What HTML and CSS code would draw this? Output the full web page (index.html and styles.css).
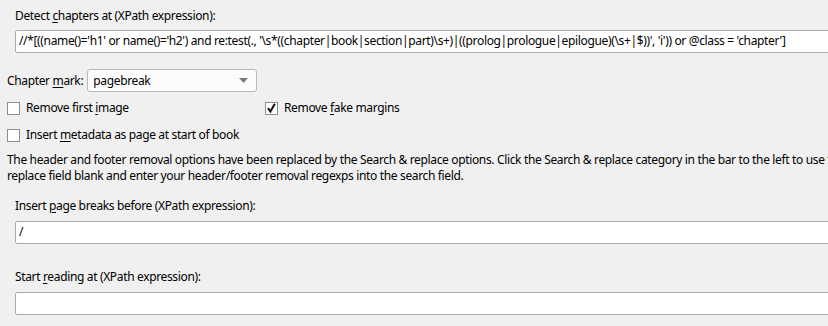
FILE: index.html
```html
<!DOCTYPE html>
<html>
<head>
<meta charset="utf-8">
<link rel="stylesheet" href="styles.css">
</head>
<body>
<div class="page">
  <div class="field first">
    <div class="label">Detect <u>c</u>hapters at (XPath expression):</div>
    <div class="input">//*[((name()='h1' or name()='h2') and re:test(., '\s*((chapter|book|section|part)\s+)|((prolog|prologue|epilogue)(\s+|$))', 'i')) or @class = 'chapter']</div>
  </div>

  <div class="mark-row">
    <span class="label">Chapter <u>m</u>ark:</span>
    <div class="combo">
      <span>pagebreak</span>
      <svg class="arrow" width="9" height="5" viewBox="0 0 9 5"><path d="M0 0H9L4.5 5Z" fill="#7a7a7a"/></svg>
    </div>
  </div>

  <div class="checks">
    <label class="check"><span class="box"></span><span>Remove first <u>i</u>mage</span></label>
    <label class="check"><span class="box checked"><svg width="9" height="10" viewBox="0 0 9 10"><path d="M1 5.2L3.4 8.6L7.8 0.8" fill="none" stroke="#111" stroke-width="2"/></svg></span><span>Remove <u>f</u>ake margins</span></label>
    <label class="check"><span class="box"></span><span>Insert <u>m</u>etadata as page at start of book</span></label>
  </div>

  <p class="note">The header and footer removal options have been replaced by the Search &amp; replace options. Click the Search &amp; replace category in the bar to the left to use these options. Leave the<br>replace field blank and enter your header/footer removal regexps into the search field.</p>

  <div class="field second">
    <div class="label">Insert <u>p</u>age breaks before (XPath expression):</div>
    <div class="input">/</div>
  </div>

  <div class="field third">
    <div class="label">Start <u>r</u>eading at (XPath expression):</div>
    <div class="input"></div>
  </div>
</div>
</body>
</html>
```

FILE: styles.css
```css
html, body {
  margin: 0;
  padding: 0;
  background: #f0f0f0;
  overflow: hidden;
}

body {
  width: 828px;
  height: 326px;
  font-family: "Noto Sans", "Open Sans", sans-serif;
  font-size: 12px;
  letter-spacing: -0.35px;
  line-height: 16px;
  color: #000;
}

.page {
  padding-top: 8px;
  width: 828px;
}

u {
  text-decoration: underline;
  text-underline-offset: 2px;
}

.field {
  padding-left: 15px;
}

.field .label {
  height: 16px;
}

.input {
  box-sizing: border-box;
  width: 900px;
  height: 23px;
  margin-top: 6px;
  background: #fff;
  border: 1px solid #ababab;
  border-radius: 2px;
  padding: 2px 3px;
  white-space: nowrap;
  overflow: hidden;
}

.mark-row {
  display: flex;
  align-items: center;
  gap: 4px;
  padding-left: 7px;
  margin-top: 16px;
}

.combo {
  box-sizing: border-box;
  width: 170px;
  height: 23px;
  background: #fcfcfc;
  border: 1px solid #b9b9b9;
  border-radius: 3px;
  display: flex;
  align-items: center;
  justify-content: space-between;
  padding: 0 8px 0 5px;
}

.checks {
  display: grid;
  grid-template-columns: 258px 1fr;
  row-gap: 11px;
  padding-left: 7px;
  margin-top: 8px;
}

.check {
  display: flex;
  align-items: center;
  gap: 6px;
  height: 16px;
}

.box {
  box-sizing: border-box;
  width: 13px;
  height: 13px;
  background: #fff;
  border: 1px solid #8f8f8f;
  display: flex;
  align-items: center;
  justify-content: center;
}

.note {
  margin: 9px 0 0 0;
  padding-left: 7px;
  width: 900px;
  white-space: nowrap;
}

.second {
  margin-top: 14px;
}

.second .input {
  margin-top: 7px;
}

.third {
  margin-top: 25px;
}

.third .input {
  margin-top: 7px;
}
```
